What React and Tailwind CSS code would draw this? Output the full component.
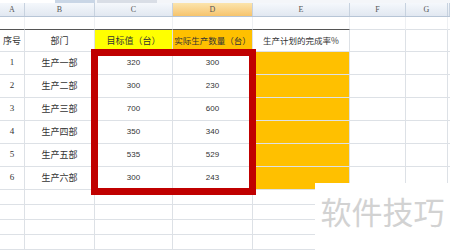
import React from "react";
import clsx from "clsx";

const W = ["w-[25px]", "w-[70px]", "w-[78px]", "w-[80px]", "w-[97px]", "w-[56px]", "w-[42px]", "flex-1"];
const LETTERS = ["A", "B", "C", "D", "E", "F", "G", ""];

const rows = [
  ["1", "生产一部", "320", "300"],
  ["2", "生产二部", "300", "230"],
  ["3", "生产三部", "700", "600"],
  ["4", "生产四部", "350", "340"],
  ["5", "生产五部", "535", "529"],
  ["6", "生产六部", "300", "243"],
];

const Cell = ({ i, className, children }) => (
  <div
    className={clsx(
      "flex shrink-0 items-center justify-center overflow-visible whitespace-nowrap border-b border-r border-[#dde1e6]",
      W[i],
      i === 7 && "border-r-0",
      className
    )}
  >
    {children}
  </div>
);

export default function App() {
  return (
    <div className="relative h-[250px] w-[450px] overflow-hidden bg-white font-['Noto_Sans_CJK_SC','Liberation_Sans',sans-serif] text-[#333]">
      {/* formula bar remnant */}
      <div className="flex h-[3px] bg-[#f4f6f9]">
        <div className="w-[55px] bg-white" />
        <div className="w-[40px] bg-[#c9d6e6]" />
        <div className="ml-[2px] w-[60px] bg-[#d9dee6]" />
      </div>

      {/* column letters */}
      <div className="flex h-[14px] border-b border-[#b7c5d6] bg-gradient-to-b from-[#f5f8fc] to-[#e1e8f1]">
        {LETTERS.map((l, i) => (
          <div
            key={i}
            className={clsx(
              "flex shrink-0 items-center justify-center border-r border-[#c7d2df] font-['Liberation_Serif',serif] text-[8px] text-[#555]",
              W[i],
              i === 3 && "bg-gradient-to-b from-[#fbe4ad] to-[#f6c46c]"
            )}
          >
            {l}
          </div>
        ))}
      </div>

      {/* empty row above table */}
      <div className="flex h-[13px]">
        {W.map((_, i) => (
          <Cell key={i} i={i} className={clsx("border-r-[#eef0f3]", i <= 4 && "border-b-[#555]")} />
        ))}
      </div>

      {/* table header */}
      <div className="flex h-[22px] text-[9px]">
        <Cell i={0} className="border-[#555]">序号</Cell>
        <Cell i={1} className="border-[#555]">部门</Cell>
        <Cell i={2} className="border-[#555] bg-[#ffff00]">目标值（台）</Cell>
        <Cell i={3} className="border-[#777] bg-[#ffc000] text-[8.5px]">实际生产数量（台）</Cell>
        <Cell i={4} className="border-[#888] text-[8.5px]">生产计划的完成率%</Cell>
        <Cell i={5} />
        <Cell i={6} />
        <Cell i={7} />
      </div>

      {/* data rows */}
      {rows.map((r) => (
        <div key={r[0]} className="flex h-[23px]">
          <Cell i={0} className="border-[#555] font-['Liberation_Serif',serif] text-[9px]">{r[0]}</Cell>
          <Cell i={1} className="border-[#555] text-[9px]">{r[1]}</Cell>
          <Cell i={2} className="border-[#555] font-['Liberation_Sans',sans-serif] text-[8px]">{r[2]}</Cell>
          <Cell i={3} className="border-[#555] font-['Liberation_Sans',sans-serif] text-[8px]">{r[3]}</Cell>
          <Cell i={4} className="border-[#555] bg-[#ffc000]" />
          <Cell i={5} />
          <Cell i={6} />
          <Cell i={7} />
        </div>
      ))}

      {/* empty rows below */}
      {[0, 1, 2, 3].map((k) => (
        <div key={k} className="flex h-[15px]">
          {W.map((_, i) => (
            <Cell key={i} i={i} />
          ))}
        </div>
      ))}

      {/* red highlight frame */}
      <div className="absolute left-[91px] top-[49px] h-[146px] w-[165px] border-[7px] border-[#c00000]" />

      {/* watermark */}
      <div className="absolute left-[315px] top-[183px] flex h-[67px] w-[135px] items-start justify-center bg-white pt-[12px] text-[31px] leading-none text-[#d2d2d2]">
        软件技巧
      </div>
    </div>
  );
}
